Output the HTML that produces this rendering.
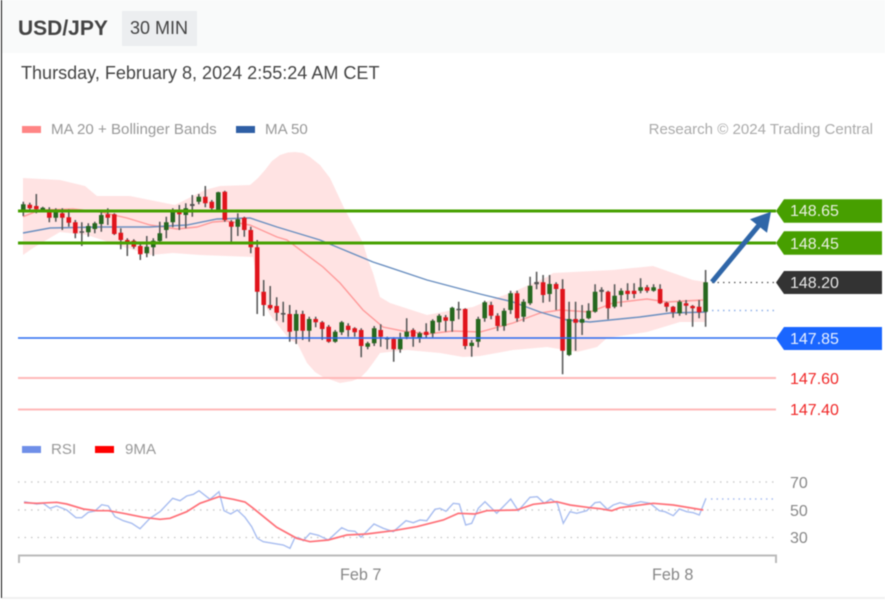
<!DOCTYPE html>
<html><head><meta charset="utf-8"><style>
html,body{margin:0;padding:0;background:#fff}
body{width:885px;height:605px;overflow:hidden;position:relative;font-family:"Liberation Sans",sans-serif}
#root{position:absolute;left:0;top:0;width:885px;height:605px;filter:blur(.45px)}
.t{position:absolute;white-space:nowrap;line-height:1}
</style></head><body><div id="root">
<div style="position:absolute;left:2px;top:0;width:883px;height:53px;background:#f9fafa"></div>
<div style="position:absolute;left:1px;top:0;width:1.4px;height:598px;background:#111"></div>
<div style="position:absolute;left:2px;top:597px;width:883px;height:2px;background:#f0f0f0"></div>
<div class="t" style="left:18px;top:18px;font-size:21px;font-weight:bold;color:#444">USD/JPY</div>
<div style="position:absolute;left:122px;top:11px;width:75px;height:35px;background:#eceef0"></div>
<div class="t" style="left:130px;top:19px;font-size:18px;color:#444">30 MIN</div>
<div class="t" style="left:21px;top:64px;font-size:18.05px;color:#444">Thursday, February 8, 2024 2:55:24 AM CET</div>
<div style="position:absolute;left:22px;top:126px;width:19px;height:7px;background:#ff8585"></div>
<div class="t" style="left:51px;top:122px;font-size:15.1px;color:#999">MA 20 + Bollinger Bands</div>
<div style="position:absolute;left:236px;top:126px;width:19px;height:7px;background:#2f5fa5"></div>
<div class="t" style="left:265px;top:122px;font-size:15.1px;color:#999">MA 50</div>
<div class="t" style="right:12px;top:122px;font-size:15.05px;color:#aaa">Research © 2024 Trading Central</div>
<div style="position:absolute;left:22px;top:446px;width:19px;height:7px;background:#6f8fe8"></div>
<div class="t" style="left:51px;top:442px;font-size:15.1px;color:#999">RSI</div>
<div style="position:absolute;left:95px;top:446px;width:19px;height:7px;background:#f00"></div>
<div class="t" style="left:125px;top:442px;font-size:15.1px;color:#999">9MA</div>
<svg width="885" height="605" viewBox="0 0 885 605" style="position:absolute;left:0;top:0" fill="none">
<path fill="#ffe3e3" d="M23 178L60 180L85 186L97 196L130 196L165 203L175 205L185 200L205 190L220 186L250 185L258 178L265 170L272 161L280 155L288 152.500L295 152L303 153L310 157L320 165L330 178L338 195L345 210L355 228L363 243L368 260L373 273L380 297L390 303L427 315L453 310L473 307L485 302L513 292L547 277L553 273L613 270L653 266L693 280L706 282L706 322L680 322L647 332L607 338L597 347L577 352L547 347L513 350L480 356L463 357L440 353L407 350L380 353L373 363L367 371L360 378L352 381L340 383L323 377L315 372L307 363L297 343L290 340L270 315L258 290L253 257L200 255L173 253L150 255L127 248L87 235L60 232L33 248L23 255Z"/>
<path stroke="#ff9a9a" stroke-width="1.4" d="M23 216.700L40 210L73 209L100 212L127 218L150 225L177 229L197 227L213 222L227 221L250 225L277 237L287 240L323 267L340 283L363 310L383 327L403 331L427 334L453 331L480 332L513 323L540 313L560 310L590 312L613 303L647 299L667 302L703 300"/>
<path stroke="#6a8fc0" stroke-width="1.4" d="M23 233L50 228L100 227L150 227L187 225L217 219L250 218L277 227L320 240L373 262L427 280L480 294L513 302L540 312L567 320L590 322L640 317L670 313L707 312"/>
<path stroke="#5c5c5c" stroke-width="1.6" d="M23.3 201.7V216M29.8 202.7V210M36.3 194V213.3M42.8 206.7V211.7M49.3 207.3V222.3M55.8 208.3V221.7M62.3 208.3V230M68.8 209.3V226.7M75.3 220V238.3M81.8 222.3V246M88.3 223.3V236.7M94.8 221.7V233.3M101.3 211.7V231.7M107.8 208.3V225M114.3 213.3V235M120.8 228.3V249.3M127.3 238.3V256M133.8 239.3V248.7M140.3 244V260M146.8 236V257.3M153.3 238.3V256M159.8 221.7V242.7M166.3 216.7V238.3M172.8 208.3V227.3M179.3 205V230M185.8 203.3V228.3M192.3 195V216.7M198.8 194V204.3M205.3 186V207.3M211.8 200V210.7M218.3 191.7V210.7M224.8 190.7V221.7M231.3 220V241.7M237.8 213.3V236M244.3 216.7V236.7M250.8 226.7V253.3M257.2 240V314M263.7 280V316M270.2 286V310M276.7 297.3V320.7M283.2 301.7V322.3M289.7 305V341.7M296.2 310V344M302.7 310.7V340M309.2 316.7V341.7M315.7 316.7V327.3M322.2 321V340M328.7 325V342.7M335.2 330V342.7M341.7 321V335M348.2 323.3V336.7M354.7 327.3V336.7M361.2 328.3V357.3M367.7 341.7V349.3M374.2 326V346M380.7 324.3V346.7M387.2 336.7V349.3M393.7 337.3V361.7M400.2 332.7V352.7M406.7 318.3V339.3M413.2 328.3V346.7M419.7 331.7V342.7M426.2 323.3V338.3M432.7 319.3V337.3M439.2 314V330.7M445.7 315V331.7M452.2 306.7V331.7M458.7 301.7V319.3M465.2 308.3V349.3M471.7 340V356.7M478.2 316.7V347.3M484.7 300.7V321.7M491.1 301.7V319.3M497.6 313.3V331M504.1 308.3V330.7M510.6 290.7V314M517.1 290.7V321.7M523.6 299.3V321.7M530.1 276.7V305M536.6 271.7V289.3M543.1 275V302.7M549.6 275V301.7M556.1 282.3V310M562.6 279.3V374.3M569.1 301.7V356M575.6 301.7V350.7M582.1 305V335M588.6 303.3V319.3M595.1 284.3V312.7M601.6 287.3V301.7M608.1 290.7V319.3M614.6 284.3V308.3M621.1 288.3V306.7M627.6 283.3V300M634.1 283.3V298.3M640.6 278.3V293.3M647.1 285V292.7M653.6 284.3V291.7M660.1 284.3V304M666.6 301.7V311.7M673.1 306V317.7M679.6 300V315.7M686.1 300V315M692.6 305V326.7M699.1 300V318.3M705.6 270V326.7"/>
<path stroke="#555" stroke-width="4.6" d="M81.8 231.2V232.8M192.3 204V206M283.2 313V314.6M387.2 338V339.5M458.7 308.7V310.2M536.6 282V284.2M601.6 289.8V291.9"/>
<path stroke="#e0141c" stroke-width="4.6" d="M29.8 204.7V208.3M36.3 206V209.3M49.3 210.7V217.7M62.3 213.3V217.7M68.8 217.3V222.7M75.3 222.3V233.3M107.8 214.3V217.7M114.3 214.3V234M120.8 232.7V240M127.3 240V243.3M133.8 240.7V246.7M140.3 246V254.3M179.3 210V214.3M205.3 196.7V203.3M211.8 201.7V208.3M224.8 191.7V220M231.3 221.7V226.7M244.3 217.7V230M250.8 230V247.3M257.2 247.3V291.7M263.7 291.7V305M270.2 305V308.3M276.7 306V312.7M289.7 314V331.7M302.7 314V330.7M315.7 319V322.3M322.2 322.3V329M328.7 326.7V341.7M348.2 325.7V330M354.7 328.3V332.3M361.2 330V346M380.7 330V336.7M393.7 339V349.3M413.2 330V336.7M426.2 331.7V335M445.7 317.3V320.7M465.2 309V346M491.1 305V315.7M497.6 315.7V326M517.1 293.3V318.3M543.1 282.3V295M556.1 284V289M562.6 289V350.7M575.6 319V322.7M608.1 291.7V308.3M627.6 290.7V294M634.1 290.7V294M647.1 287.3V290.7M660.1 289V303.3M666.6 302.7V306.7M673.1 306.7V312.3M686.1 303.3V305.7M692.6 306V308.3M699.1 306.7V312.3"/>
<path stroke="#26681f" stroke-width="4.6" d="M23.3 204.3V210.7M42.8 207.7V210M55.8 212.3V217.7M88.3 226V232.3M94.8 223.3V229M101.3 215V224M146.8 246.7V253.3M153.3 240.7V247.3M159.8 233.3V241M166.3 222.3V230M172.8 211.7V222.3M185.8 208.3V215M198.8 196.7V201.7M218.3 192.3V210M237.8 219.3V226.7M296.2 314V330.7M309.2 319V330.7M335.2 331.7V341.7M341.7 322.3V332.3M367.7 343.3V346.7M374.2 328.3V343.3M400.2 339V349.3M406.7 331.7V336.7M419.7 333.3V338.3M432.7 320.7V333.3M439.2 315.7V322.3M452.2 307.7V321M471.7 342.7V346M478.2 319V341.7M484.7 302.3V318.3M504.1 310.7V326M510.6 293.3V310M523.6 301.7V316.7M530.1 285.7V303.3M549.6 284V294M569.1 319V355M582.1 319V322.7M588.6 310.7V318.3M595.1 291.7V311.7M614.6 295.7V306.7M621.1 290.7V295M640.6 287.3V290.7M653.6 287.3V290.7M679.6 301.7V313.3M705.6 282.3V311.7"/>
<path stroke="#46a000" stroke-width="3" d="M18 211H776M18 243H776"/>
<path stroke="#2a6cf0" stroke-width="1.6" d="M18 338H776"/>
<path stroke="#ffb8b8" stroke-width="2" d="M18 378H776M18 409.500H776"/>
<path stroke="#555" stroke-width="1.3" stroke-dasharray="1.5 4" d="M712 282.500H776"/>
<path stroke="#8fb0e8" stroke-width="1.5" stroke-dasharray="1.5 4" d="M712 310.500H774"/>
<path stroke="#2f66a8" stroke-width="5" d="M712 282L760 224"/>
<path fill="#2f66a8" d="M771 211.700L750 219.300L767 232.700Z"/>
<path fill="#479f00" d="M776 211L784 199.300H882V222.700H784ZM776 243L784 231.300H882V254.700H784Z"/>
<path fill="#333" d="M776 282.500L784 271H882V294H784Z"/>
<path fill="#1a66ff" d="M776 338.500L784 327H882V350H784Z"/>
<text x="790" y="216" font-size="16" fill="#e8f0e0" font-family="Liberation Sans">148.65</text>
<text x="790" y="249" font-size="16" fill="#e8f0e0" font-family="Liberation Sans">148.45</text>
<text x="790" y="288" font-size="16" fill="#e6e6e6" font-family="Liberation Sans">148.20</text>
<text x="790" y="344" font-size="16" fill="#e6eeff" font-family="Liberation Sans">147.85</text>
<text x="790" y="384" font-size="16" fill="#f02828" font-family="Liberation Sans">147.60</text>
<text x="790" y="415" font-size="16" fill="#f02828" font-family="Liberation Sans">147.40</text>
<path stroke="#c4c4c4" stroke-width="1.2" stroke-dasharray="1.5 5" d="M18 482H776M18 510H776M18 537.500H776"/>
<path stroke="#bbb" stroke-width="2" d="M19 563V555.500H776V563"/>
<path stroke="#a8bdf0" stroke-width="1.4" d="M24 501.700L36.700 504L43.300 503.300L50 508.300L56.700 506L66.700 510L76 517.700L81.700 517.700L88.300 512.300L95 511L101.700 504.700L108.300 506L115 516.700L123.300 520.700L131.700 523.300L140 528.700L150 518.300L160 511.700L172.700 498.300L180 500.700L186.700 496L193.300 494.300L199 490.700L210 499.300L219 491.700L224 510.700L230.700 514L237.300 510L245 517.300L251.700 526.700L257.300 538.300L263.300 541.700L283.300 545L290 548.300L295 537.300L300 538.300L303.300 540.700L310 533.300L318.300 535.300L328.300 540L341.700 527.700L348.300 530.700L355 531.300L361 537.300L374 524L383.300 528.300L393.300 531.700L406 520.700L413.300 522.700L420 520L426.700 520.700L435 509.300L440 508.300L446 511.300L453.300 503.300L459.300 504L465.700 525L471.700 523.300L478.300 508.300L485 501.700L496.700 513.300L510.700 499L518.300 510.700L530 497.300L537.300 496.700L544.300 503.300L550.700 499L557.300 503.300L563.300 523.300L570 511.700L576.700 513.300L586.700 510.700L595 502.700L600 502L607.300 509.300L613.300 505L620 502.700L628.300 505L640.700 501.700L650 503.300L659.300 510.700L665 511.700L673.300 515.700L679.300 509L686.700 511.700L693.300 512.700L699.300 515L706 498.300"/>
<path stroke="#a8bdf0" stroke-width="1.5" stroke-dasharray="1.5 4" d="M711 499H775"/>
<path stroke="#ff7078" stroke-width="1.7" d="M24 502.700L36.700 503.300L56.700 502.300L66.700 504L83.300 509L96.700 510.700L108.300 510.700L123.300 513.300L143.300 517.300L160 519.300L170 518.300L186.700 511.700L200 503.300L219 496.700L233.300 499.300L245 502L253.300 508.300L276.700 527.300L296.700 538.300L310 541.700L328.300 540L346.700 535L366.700 534L393.300 530.700L416.700 526.700L443.300 520L458.300 513.300L475 514L486.700 510.700L516.700 510L533.300 504.300L556.700 501.700L570 505L590 507.700L600 508.700L611.700 510.700L620 507.700L653.300 503.300L673.300 505L703.300 510"/>
<text x="790" y="488" font-size="16" fill="#888" font-family="Liberation Sans">70</text>
<text x="790" y="516" font-size="16" fill="#888" font-family="Liberation Sans">50</text>
<text x="790" y="543" font-size="16" fill="#888" font-family="Liberation Sans">30</text>
<text x="340" y="580" font-size="16.200" fill="#888" font-family="Liberation Sans">Feb 7</text>
<text x="652" y="580" font-size="16.200" fill="#888" font-family="Liberation Sans">Feb 8</text>
</svg>
</div></body></html>
